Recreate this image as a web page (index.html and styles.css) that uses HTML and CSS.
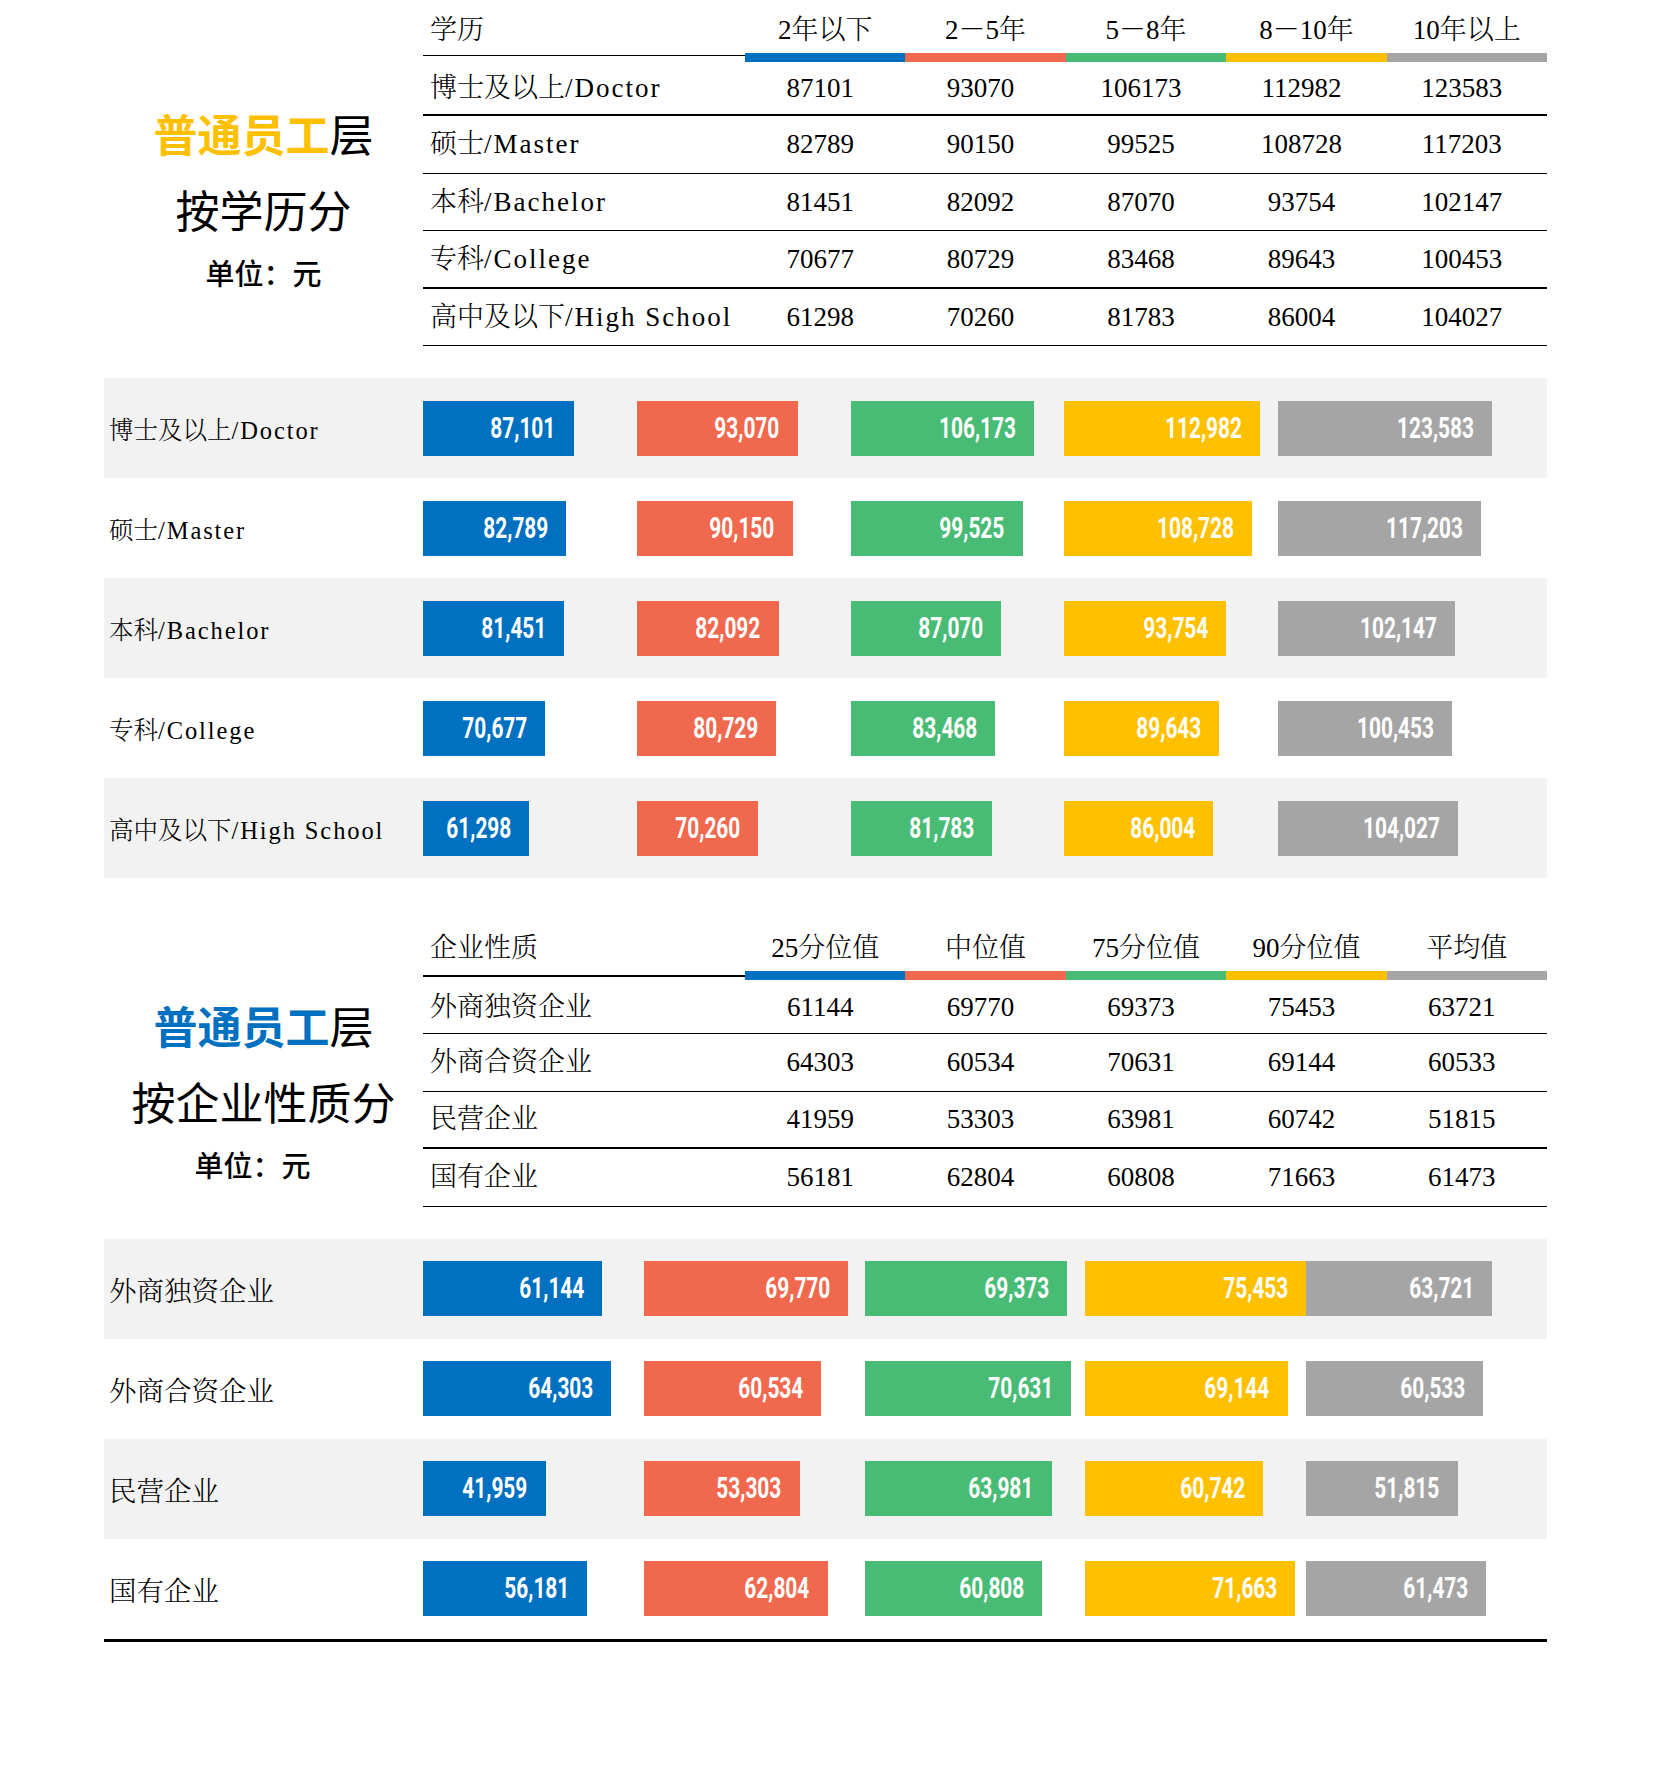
FILE: index.html
```html
<!DOCTYPE html>
<html lang="zh-CN">
<head>
<meta charset="utf-8">
<title>普通员工层薪酬</title>
<link rel="stylesheet" href="styles.css">
</head>
<body>
<div class="page">

  <section class="summary">
    <div class="title title--edu">
      <div class="title-main"><span class="hl hl--yellow">普通员工</span>层</div>
      <div class="title-sub">按学历分</div>
      <div class="title-unit">单位：元</div>
    </div>
    <div class="table">
      <div class="row thead">
        <div class="th th-label">学历</div>
        <div class="th c1">2年以下</div>
        <div class="th c2">2－5年</div>
        <div class="th c3">5－8年</div>
        <div class="th c4">8－10年</div>
        <div class="th c5">10年以上</div>
      </div>
      <div class="row tr tr--first tr--thick">
        <div class="td td-label">博士及以上<span class="en">/Doctor</span></div>
        <div class="td num">87101</div><div class="td num">93070</div><div class="td num">106173</div><div class="td num">112982</div><div class="td num">123583</div>
      </div>
      <div class="row tr">
        <div class="td td-label">硕士<span class="en">/Master</span></div>
        <div class="td num">82789</div><div class="td num">90150</div><div class="td num">99525</div><div class="td num">108728</div><div class="td num">117203</div>
      </div>
      <div class="row tr">
        <div class="td td-label">本科<span class="en">/Bachelor</span></div>
        <div class="td num">81451</div><div class="td num">82092</div><div class="td num">87070</div><div class="td num">93754</div><div class="td num">102147</div>
      </div>
      <div class="row tr tr--thick">
        <div class="td td-label">专科<span class="en">/College</span></div>
        <div class="td num">70677</div><div class="td num">80729</div><div class="td num">83468</div><div class="td num">89643</div><div class="td num">100453</div>
      </div>
      <div class="row tr">
        <div class="td td-label">高中及以下<span class="en">/High School</span></div>
        <div class="td num">61298</div><div class="td num">70260</div><div class="td num">81783</div><div class="td num">86004</div><div class="td num">104027</div>
      </div>
    </div>
  </section>

  <section class="chart chart--edu">
    <div class="brow brow--band">
      <div class="blabel">博士及以上<span class="en">/Doctor</span></div>
      <div class="bcol"><div class="bar b1" style="width:150.65px"><span class="bar-val">87,101</span></div></div>
      <div class="bcol"><div class="bar b2" style="width:160.97px"><span class="bar-val">93,070</span></div></div>
      <div class="bcol"><div class="bar b3" style="width:183.63px"><span class="bar-val">106,173</span></div></div>
      <div class="bcol"><div class="bar b4" style="width:195.41px"><span class="bar-val">112,982</span></div></div>
      <div class="bcol"><div class="bar b5" style="width:213.75px"><span class="bar-val">123,583</span></div></div>
    </div>
    <div class="brow">
      <div class="blabel">硕士<span class="en">/Master</span></div>
      <div class="bcol"><div class="bar b1" style="width:143.19px"><span class="bar-val">82,789</span></div></div>
      <div class="bcol"><div class="bar b2" style="width:155.92px"><span class="bar-val">90,150</span></div></div>
      <div class="bcol"><div class="bar b3" style="width:172.14px"><span class="bar-val">99,525</span></div></div>
      <div class="bcol"><div class="bar b4" style="width:188.06px"><span class="bar-val">108,728</span></div></div>
      <div class="bcol"><div class="bar b5" style="width:202.72px"><span class="bar-val">117,203</span></div></div>
    </div>
    <div class="brow brow--band">
      <div class="blabel">本科<span class="en">/Bachelor</span></div>
      <div class="bcol"><div class="bar b1" style="width:140.88px"><span class="bar-val">81,451</span></div></div>
      <div class="bcol"><div class="bar b2" style="width:141.99px"><span class="bar-val">82,092</span></div></div>
      <div class="bcol"><div class="bar b3" style="width:150.60px"><span class="bar-val">87,070</span></div></div>
      <div class="bcol"><div class="bar b4" style="width:162.16px"><span class="bar-val">93,754</span></div></div>
      <div class="bcol"><div class="bar b5" style="width:176.67px"><span class="bar-val">102,147</span></div></div>
    </div>
    <div class="brow">
      <div class="blabel">专科<span class="en">/College</span></div>
      <div class="bcol"><div class="bar b1" style="width:122.24px"><span class="bar-val">70,677</span></div></div>
      <div class="bcol"><div class="bar b2" style="width:139.63px"><span class="bar-val">80,729</span></div></div>
      <div class="bcol"><div class="bar b3" style="width:144.37px"><span class="bar-val">83,468</span></div></div>
      <div class="bcol"><div class="bar b4" style="width:155.05px"><span class="bar-val">89,643</span></div></div>
      <div class="bcol"><div class="bar b5" style="width:173.74px"><span class="bar-val">100,453</span></div></div>
    </div>
    <div class="brow brow--band">
      <div class="blabel">高中及以下<span class="en">/High School</span></div>
      <div class="bcol"><div class="bar b1" style="width:106.02px"><span class="bar-val">61,298</span></div></div>
      <div class="bcol"><div class="bar b2" style="width:121.52px"><span class="bar-val">70,260</span></div></div>
      <div class="bcol"><div class="bar b3" style="width:141.45px"><span class="bar-val">81,783</span></div></div>
      <div class="bcol"><div class="bar b4" style="width:148.75px"><span class="bar-val">86,004</span></div></div>
      <div class="bcol"><div class="bar b5" style="width:179.93px"><span class="bar-val">104,027</span></div></div>
    </div>
  </section>

  <section class="summary summary--ent">
    <div class="title title--ent">
      <div class="title-main"><span class="hl hl--blue">普通员工</span>层</div>
      <div class="title-sub">按企业性质分</div>
      <div class="title-unit title-unit--ent">单位：元</div>
    </div>
    <div class="table">
      <div class="row thead">
        <div class="th th-label th-label--thick">企业性质</div>
        <div class="th c1">25分位值</div>
        <div class="th c2">中位值</div>
        <div class="th c3">75分位值</div>
        <div class="th c4">90分位值</div>
        <div class="th c5">平均值</div>
      </div>
      <div class="row tr tr--first">
        <div class="td td-label">外商独资企业</div>
        <div class="td num">61144</div><div class="td num">69770</div><div class="td num">69373</div><div class="td num">75453</div><div class="td num">63721</div>
      </div>
      <div class="row tr">
        <div class="td td-label">外商合资企业</div>
        <div class="td num">64303</div><div class="td num">60534</div><div class="td num">70631</div><div class="td num">69144</div><div class="td num">60533</div>
      </div>
      <div class="row tr tr--thick">
        <div class="td td-label">民营企业</div>
        <div class="td num">41959</div><div class="td num">53303</div><div class="td num">63981</div><div class="td num">60742</div><div class="td num">51815</div>
      </div>
      <div class="row tr">
        <div class="td td-label">国有企业</div>
        <div class="td num">56181</div><div class="td num">62804</div><div class="td num">60808</div><div class="td num">71663</div><div class="td num">61473</div>
      </div>
    </div>
  </section>

  <section class="chart chart--ent">
    <div class="brow brow--band">
      <div class="blabel">外商独资企业</div>
      <div class="bcol"><div class="bar b1" style="width:178.89px"><span class="bar-val">61,144</span></div></div>
      <div class="bcol"><div class="bar b2" style="width:204.13px"><span class="bar-val">69,770</span></div></div>
      <div class="bcol"><div class="bar b3" style="width:202.96px"><span class="bar-val">69,373</span></div></div>
      <div class="bcol"><div class="bar b4" style="width:220.75px"><span class="bar-val">75,453</span></div></div>
      <div class="bcol"><div class="bar b5" style="width:186.43px"><span class="bar-val">63,721</span></div></div>
    </div>
    <div class="brow">
      <div class="blabel">外商合资企业</div>
      <div class="bcol"><div class="bar b1" style="width:188.13px"><span class="bar-val">64,303</span></div></div>
      <div class="bcol"><div class="bar b2" style="width:177.10px"><span class="bar-val">60,534</span></div></div>
      <div class="bcol"><div class="bar b3" style="width:206.65px"><span class="bar-val">70,631</span></div></div>
      <div class="bcol"><div class="bar b4" style="width:202.30px"><span class="bar-val">69,144</span></div></div>
      <div class="bcol"><div class="bar b5" style="width:177.10px"><span class="bar-val">60,533</span></div></div>
    </div>
    <div class="brow brow--band">
      <div class="blabel">民营企业</div>
      <div class="bcol"><div class="bar b1" style="width:122.76px"><span class="bar-val">41,959</span></div></div>
      <div class="bcol"><div class="bar b2" style="width:155.95px"><span class="bar-val">53,303</span></div></div>
      <div class="bcol"><div class="bar b3" style="width:187.19px"><span class="bar-val">63,981</span></div></div>
      <div class="bcol"><div class="bar b4" style="width:177.71px"><span class="bar-val">60,742</span></div></div>
      <div class="bcol"><div class="bar b5" style="width:151.60px"><span class="bar-val">51,815</span></div></div>
    </div>
    <div class="brow">
      <div class="blabel">国有企业</div>
      <div class="bcol"><div class="bar b1" style="width:164.37px"><span class="bar-val">56,181</span></div></div>
      <div class="bcol"><div class="bar b2" style="width:183.75px"><span class="bar-val">62,804</span></div></div>
      <div class="bcol"><div class="bar b3" style="width:177.91px"><span class="bar-val">60,808</span></div></div>
      <div class="bcol"><div class="bar b4" style="width:209.66px"><span class="bar-val">71,663</span></div></div>
      <div class="bcol"><div class="bar b5" style="width:179.85px"><span class="bar-val">61,473</span></div></div>
    </div>
  </section>

</div>
</body>
</html>
```

FILE: styles.css
```css
* {
  box-sizing: border-box;
  margin: 0;
  padding: 0;
}

html, body {
  background: #ffffff;
}

body {
  width: 1654px;
  min-height: 1790px;
  color: #000000;
  font-family: "Liberation Serif", "Noto Serif CJK SC", "Noto Sans CJK SC", serif;
}

.page {
  width: 1547px;
  padding-left: 104px;
}

/* ---------- summary (title + table) ---------- */
.summary {
  display: flex;
}

.summary--ent {
  margin-top: 40px;
}

.title {
  width: 319px;
  flex: none;
  text-align: center;
  font-family: "Noto Sans CJK SC", sans-serif;
  color: #000000;
}

.title--edu {
  padding-top: 95px;
}

.title--ent {
  padding-top: 69px;
}

.title-main {
  font-size: 44px;
  line-height: 76px;
  font-weight: 400;
}

.hl {
  font-weight: 700;
}

.hl--yellow {
  color: #ffc000;
}

.hl--blue {
  color: #0070c0;
}

.title-sub {
  font-size: 44px;
  line-height: 76px;
  font-weight: 400;
}

.title-unit {
  font-size: 29px;
  line-height: 51px;
  font-weight: 500;
}

.title-unit--ent {
  padding-right: 22px;
}

.table {
  width: 1124px;
  font-size: 27px;
  font-weight: 300;
}

.row {
  display: grid;
  grid-template-columns: 322px repeat(5, 1fr);
  align-items: center;
}

.thead {
  height: 62px;
  align-items: start;
}

.th {
  height: 62px;
  padding-top: 14px;
  line-height: 32px;
  text-align: center;
  border-bottom: 9px solid #a5a5a5;
}

.th-label {
  height: 56px;
  text-align: left;
  padding-left: 7px;
  border-bottom: 1px solid #000000;
}

.th-label--thick {
  height: 59px;
  border-bottom-width: 2px;
}

.c1 { border-bottom-color: #0070c0; }
.c2 { border-bottom-color: #f0694e; }
.c3 { border-bottom-color: #48bb74; }
.c4 { border-bottom-color: #ffc000; }
.c5 { border-bottom-color: #a5a5a5; }

.tr {
  height: 57.5px;
  border-bottom: 1px solid #000000;
}

.tr--first {
  height: 54px;
}

.tr--thick {
  border-bottom-width: 2px;
}

.td {
  line-height: 32px;
  white-space: nowrap;
}

.td-label {
  padding-left: 7px;
}

.en {
  letter-spacing: 2px;
}

.num {
  text-align: center;
  padding-right: 10px;
}

/* ---------- bar charts ---------- */
.chart {
  margin-top: 32px;
  width: 1443px;
}

.chart--ent {
  border-bottom: 3px solid #000000;
}

.brow {
  display: flex;
  align-items: center;
  height: 100px;
}

.brow--band {
  background: #f2f2f2;
}

.blabel {
  width: 319px;
  flex: none;
  padding-left: 5px;
  font-size: 24.5px;
  font-weight: 300;
  white-space: nowrap;
}

.blabel .en {
  letter-spacing: 1.9px;
}

.chart--ent .blabel {
  font-size: 27.5px;
}

.bcol {
  width: 213.75px;
  flex: none;
}

.chart--ent .bcol {
  width: 220.75px;
}

.bar {
  height: 55px;
  display: flex;
  align-items: center;
  justify-content: flex-end;
  padding-right: 18px;
  color: #ffffff;
}

.b1 { background: #0070c0; }
.b2 { background: #f0694e; }
.b3 { background: #48bb74; }
.b4 { background: #ffc000; }
.b5 { background: #a5a5a5; }

.bar-val {
  display: inline-block;
  font-family: Roboto, "Liberation Sans", sans-serif;
  font-weight: 700;
  font-size: 29px;
  line-height: 1;
  white-space: nowrap;
  transform: scaleX(0.72);
  transform-origin: right center;
}
```
